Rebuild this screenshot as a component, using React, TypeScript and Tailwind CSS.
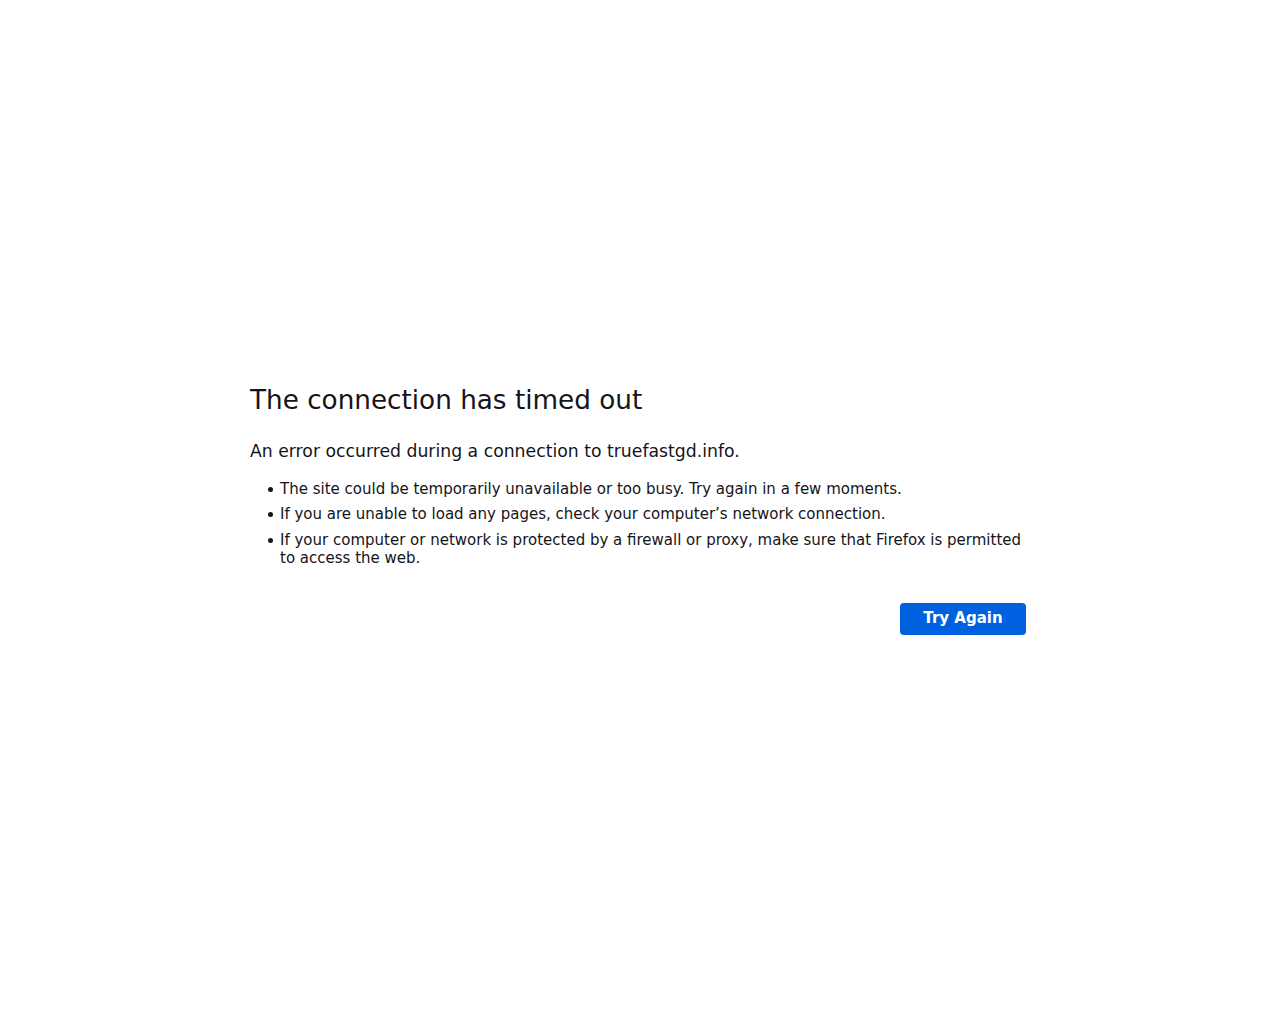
import React from "react";

const items = [
  "The site could be temporarily unavailable or too busy. Try again in a few moments.",
  "If you are unable to load any pages, check your computer\u2019s network connection.",
  "If your computer or network is protected by a firewall or proxy, make sure that Firefox is permitted to access the web.",
];

export default function App() {
  return (
    <div className="min-h-screen bg-white flex items-center justify-center text-[#15141a] font-['DejaVu_Sans',sans-serif]">
      <div className="w-[780px] mb-[4px]">
        <h1 className="text-[26.25px] leading-[1.2] font-normal">The connection has timed out</h1>
        <p className="mt-[24px] text-[17.25px] leading-[1.2]">
          An error occurred during a connection to truefastgd.info.
        </p>
        <ul className="mt-[18px] pl-[18px] text-[15px] leading-[18px]">
          {items.map((t) => (
            <li key={t} className="mb-[7.5px] flex items-start gap-[7px]">
              <span className="mt-[7px] w-[5px] h-[5px] shrink-0 rounded-full bg-[#15141a]" />
              <span>{t}</span>
            </li>
          ))}
        </ul>
        <div className="mt-[36px] flex justify-end pr-[4px]">
          <button className="h-[32px] w-[126px] rounded-[4px] bg-[#0061e0] text-white text-[15px] font-bold">
            Try Again
          </button>
        </div>
      </div>
    </div>
  );
}
